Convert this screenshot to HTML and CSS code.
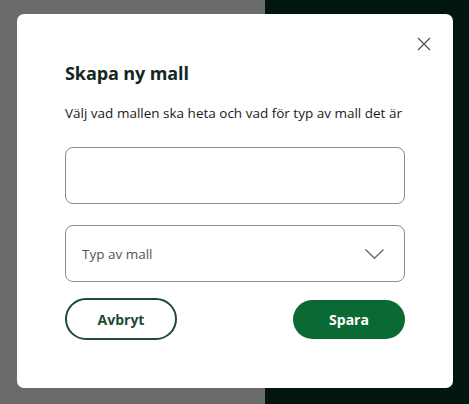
FILE: index.html
```html
<!DOCTYPE html>
<html lang="sv">
<head>
<meta charset="utf-8">
<title>Skapa ny mall</title>
<link rel="stylesheet" href="styles.css">
</head>
<body>
<div class="backdrop">
  <div class="modal" role="dialog">
    <button class="close" aria-label="Stäng">
      <svg width="14" height="14" viewBox="0 0 14 14"><path d="M1 1 L13 13 M13 1 L1 13" stroke="#555" stroke-width="1.3" fill="none"/></svg>
    </button>
    <h2 class="title">Skapa ny mall</h2>
    <p class="desc">Välj vad mallen ska heta och vad för typ av mall det är</p>
    <div class="field"></div>
    <div class="field select">
      <span class="placeholder">Typ av mall</span>
      <svg width="19" height="10" viewBox="0 0 19 10"><path d="M0.5 0.5 L9.5 9.3 L18.5 0.5" stroke="#666" stroke-width="1.3" fill="none"/></svg>
    </div>
    <div class="actions">
      <button class="btn btn-outline">Avbryt</button>
      <button class="btn btn-primary">Spara</button>
    </div>
  </div>
</div>
</body>
</html>
```
FILE: styles.css
```css
html, body {
  margin: 0;
  padding: 0;
}
body {
  font-family: "Open Sans", "Noto Sans", sans-serif;
  width: 469px;
  height: 404px;
  overflow: hidden;
}
.backdrop {
  width: 469px;
  height: 404px;
  background: linear-gradient(to right, #6b6b6b 0, #6b6b6b 265px, #031510 265px, #031510 100%);
  padding: 14px 16px 0 17px;
  box-sizing: border-box;
}
.modal {
  position: relative;
  width: 436px;
  height: 374px;
  background: #fff;
  border-radius: 7px;
  box-sizing: border-box;
  padding: 47px 48px 0 48px;
  display: flex;
  flex-direction: column;
}
.close {
  position: absolute;
  top: 22px;
  right: 21px;
  width: 16px;
  height: 16px;
  padding: 1px;
  border: 0;
  background: none;
  display: flex;
  align-items: center;
  justify-content: center;
}
.title {
  margin: 0;
  font-size: 18px;
  line-height: 24px;
  font-weight: 700;
  color: #13271d;
  letter-spacing: -0.1px;
}
.desc {
  margin: 18px 0 0 0;
  font-size: 13.5px;
  line-height: 20px;
  color: #1a1a1a;
}
.field {
  margin-top: 24px;
  height: 57px;
  border: 1px solid #8c8c8c;
  border-radius: 8px;
  box-sizing: border-box;
}
.field + .field {
  margin-top: 21px;
}
.select {
  display: flex;
  align-items: center;
  justify-content: space-between;
  padding: 0 20px 0 16px;
}
.placeholder {
  font-size: 13.5px;
  color: #555;
}
.actions {
  margin-top: 16px;
  display: flex;
  justify-content: space-between;
  align-items: center;
}
.btn {
  font-family: inherit;
  font-size: 14px;
  font-weight: 700;
  width: 112px;
  border-radius: 21px;
  cursor: pointer;
}
.btn-outline {
  height: 42px;
  background: #fff;
  border: 2px solid #1d4c34;
  color: #1d4c34;
}
.btn-primary {
  height: 39px;
  background: #0b6a33;
  border: 0;
  color: #fff;
}
```
